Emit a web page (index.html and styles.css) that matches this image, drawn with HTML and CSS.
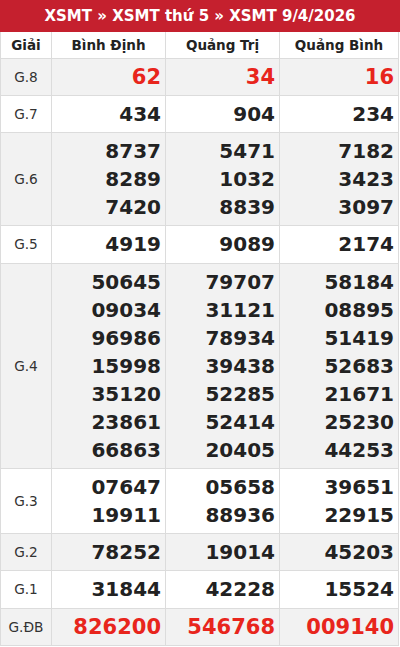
FILE: index.html
```html
<!DOCTYPE html>
<html lang="vi">
<head>
<meta charset="utf-8">
<title>XSMT 9/4/2026</title>
<link rel="stylesheet" href="styles.css">
</head>
<body>
<div class="box">
  <h2 class="title">XSMT » XSMT thứ 5 » XSMT 9/4/2026</h2>
  <table class="kq">
    <colgroup>
      <col class="c-label"><col class="c-prov"><col class="c-prov"><col class="c-prov3">
    </colgroup>
    <thead>
      <tr><th>Giải</th><th>Bình Định</th><th>Quảng Trị</th><th>Quảng Bình</th></tr>
    </thead>
    <tbody>
      <tr class="alt"><td class="lbl">G.8</td><td class="num red">62</td><td class="num red">34</td><td class="num red">16</td></tr>
      <tr><td class="lbl">G.7</td><td class="num">434</td><td class="num">904</td><td class="num">234</td></tr>
      <tr class="alt"><td class="lbl">G.6</td>
        <td class="num"><div>8737</div><div>8289</div><div>7420</div></td>
        <td class="num"><div>5471</div><div>1032</div><div>8839</div></td>
        <td class="num"><div>7182</div><div>3423</div><div>3097</div></td></tr>
      <tr><td class="lbl">G.5</td><td class="num">4919</td><td class="num">9089</td><td class="num">2174</td></tr>
      <tr class="alt"><td class="lbl">G.4</td>
        <td class="num"><div>50645</div><div>09034</div><div>96986</div><div>15998</div><div>35120</div><div>23861</div><div>66863</div></td>
        <td class="num"><div>79707</div><div>31121</div><div>78934</div><div>39438</div><div>52285</div><div>52414</div><div>20405</div></td>
        <td class="num"><div>58184</div><div>08895</div><div>51419</div><div>52683</div><div>21671</div><div>25230</div><div>44253</div></td></tr>
      <tr><td class="lbl">G.3</td>
        <td class="num"><div>07647</div><div>19911</div></td>
        <td class="num"><div>05658</div><div>88936</div></td>
        <td class="num"><div>39651</div><div>22915</div></td></tr>
      <tr class="alt"><td class="lbl">G.2</td><td class="num">78252</td><td class="num">19014</td><td class="num">45203</td></tr>
      <tr><td class="lbl">G.1</td><td class="num">31844</td><td class="num">42228</td><td class="num">15524</td></tr>
      <tr class="alt"><td class="lbl">G.ĐB</td><td class="num red">826200</td><td class="num red">546768</td><td class="num red">009140</td></tr>
    </tbody>
  </table>
</div>
</body>
</html>
```
FILE: styles.css
```css
* { box-sizing: border-box; }
html, body { margin: 0; padding: 0; background: #fff; }
body { font-family: "DejaVu Sans", sans-serif; color: #222; }
.box { width: 400px; }
.title {
  margin: 0;
  height: 32px;
  line-height: 32px;
  background: #c5202e;
  color: #fff;
  font-size: 15px;
  font-weight: bold;
  text-align: center;
}
.kq {
  width: 399px;
  border-collapse: collapse;
  table-layout: fixed;
  border-left: 1px solid #c9ccd6;
  border-right: 1px solid #d6d8de;
  border-bottom: 1px solid #d6d8de;
}
.c-label { width: 51px; }
.c-prov { width: 114px; }
.c-prov3 { width: 119px; }
.kq th {
  font-size: 13.5px;
  font-weight: bold;
  color: #222;
  height: 26px;
  padding: 0;
  border: 1px solid #dcdcdc;
  border-top: none;
  text-align: center;
  background: #fff;
}
.kq td {
  border: 1px solid #dcdcdc;
  padding: 4px 4px 4.25px 4px;
  vertical-align: middle;
}
.kq tr.alt td { background: #f2f2f2; }
.lbl {
  font-size: 13.7px;
  color: #333;
  text-align: center;
}
.kq td.lbl { padding-left: 0; padding-right: 0; }
.num {
  font-size: 20px;
  font-weight: bold;
  text-align: right;
  line-height: 28px;
  color: #222;
}
.num.red { color: #e8251c; font-size: 21px; }
```
